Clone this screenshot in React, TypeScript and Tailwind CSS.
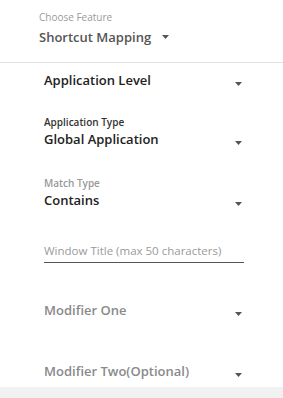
const Caret = () => (
  <svg width="7" height="4" viewBox="0 0 7 4" className="shrink-0">
    <path d="M0 0H7L3.5 4Z" fill="#555" />
  </svg>
);

const SelectRow = ({
  label,
  value,
  labelClass = "text-[#999]",
  valueClass = "text-[#222]",
}: {
  label?: string;
  value: string;
  labelClass?: string;
  valueClass?: string;
}) => (
  <div className="flex items-end justify-between">
    <div className="flex flex-col">
      {label && <span className={`text-[10px] leading-[16px] font-semibold ${labelClass}`}>{label}</span>}
      <span className={`text-[13px] leading-[18px] font-semibold ${valueClass}`}>{value}</span>
    </div>
    <div className="mb-[3px] mr-[2px]">
      <Caret />
    </div>
  </div>
);

export default function App() {
  return (
    <div
      className="w-[283px] h-[398px] bg-white flex flex-col overflow-hidden"
      style={{ fontFamily: '"Open Sans", "Noto Sans", sans-serif' }}
    >
      <div className="h-[63px] shrink-0 border-b border-[#e2e2e2] pl-[39px] pt-[10px]">
        <div className="text-[10px] leading-[14px] text-[#9a9a9a]">Choose Feature</div>
        <div className="mt-[4px] flex items-center gap-[11px]">
          <span className="text-[13px] leading-[18px] font-semibold text-[#555]">Shortcut Mapping</span>
          <Caret />
        </div>
      </div>

      <div className="flex-1 ml-[44px] w-[200px] flex flex-col">
        <div className="mt-[8px]">
          <SelectRow value="Application Level" />
        </div>
        <div className="mt-[25px]">
          <SelectRow label="Application Type" value="Global Application" labelClass="text-[#333]" />
        </div>
        <div className="mt-[27px]">
          <SelectRow label="Match Type" value="Contains" />
        </div>
        <div className="mt-[34px] border-b border-[#555] pt-[1px] pb-[4px] text-[11.5px] leading-[14px] text-[#9a9a9a]">
          Window Title (max 50 characters)
        </div>
        <div className="mt-[38px]">
          <SelectRow value="Modifier One" valueClass="text-[#8a8a8a]" />
        </div>
        <div className="mt-[43px]">
          <SelectRow value="Modifier Two(Optional)" valueClass="text-[#8a8a8a]" />
        </div>
      </div>

      <div className="h-[11px] shrink-0 bg-[#f1f1f1]" />
    </div>
  );
}
